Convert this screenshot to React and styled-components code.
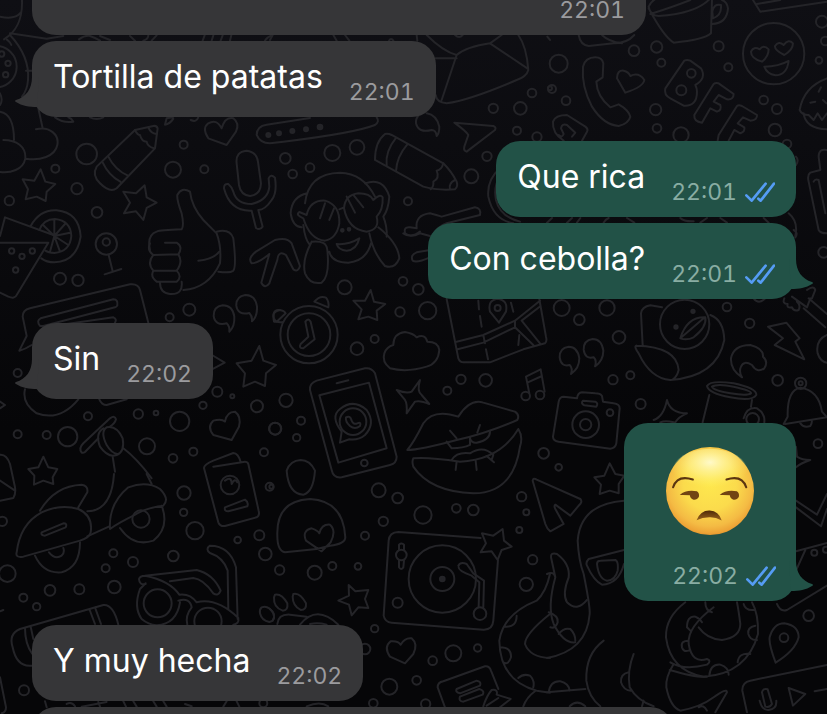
import React from 'react';
import styled, { createGlobalStyle, ThemeProvider } from 'styled-components';

const theme = {
    backgroundTop: '#0f0f14',
    backgroundBottom: '#060608',
    doodleColor: '#242428',
    receivedColor: '#363638',
    sentColor: '#225247',
    textColor: '#ffffff',
    receivedTimeColor: '#9b9b9e',
    sentTimeColor: '#89ada3',
    readColor: '#559cf4',
};

const messages = [
    { id: 1, time: '22:01', width: 614 },
    { id: 2, text: 'Tortilla de patatas', time: '22:01', last: true },
    { id: 3, text: 'Que rica', time: '22:01', sent: true },
    { id: 4, text: 'Con cebolla?', time: '22:01', sent: true, last: true },
    { id: 5, text: 'Sin', time: '22:02', last: true },
    { id: 6, emoji: true, time: '22:02', sent: true, last: true },
    { id: 7, text: 'Y muy hecha', time: '22:02' },
    { id: 8, width: 662 },
];

// Doodles of the wallpaper, one block per tile.
// Each tile is 840 x 720 units, drawn at a third of its size.
// c: circles [x, y, r], d: filled dots, p: outlines
const tiles = [
    {
        x: 0,
        y: 0,
        c: [[-12, 200, 62], [5, 162, 8], [24, 190, 8], [17, 224, 8], [260, 462, 31], [551, 434, 12], [519, 509, 24], [613, 508, 12], [166, 506, 12], [231, 566, 17], [28, 602, 14], [291, 637, 16]],
        p: [
            'M66 0C68 60 50 95 12 118M0 50Q45 60 62 38',
            'M30 100L140 116L190 108M30 105Q90 170 84 240Q82 270 66 290M20 118Q30 125 34 135M78 212H100',
            'M0 280Q10 300 0 315',
            'M0 335C30 340 42 370 42 420M10 420C50 420 78 440 76 475C70 510 30 520 0 516M115 325L128 385M108 388C150 378 178 405 172 435C165 470 120 482 78 476',
            'M122 508L136 545L166 552L140 575L137 603L110 590L77 598L84 568L68 538L103 542Z',
            'M434 556L440 592L470 608L440 624L430 660L408 634L372 640L390 608L370 575L408 580Z',
            'M405 390L290 500Q275 525 300 550Q330 580 350 565L465 445L473 385Q470 376 460 378Z',
            'M325 470Q345 510 384 527M308 487Q325 525 362 546M405 390Q412 405 420 405Q425 425 440 425Q442 440 462 445M445 382Q452 400 470 402',
            'M680 435L625 415Q605 385 625 370Q650 355 665 385Q675 350 700 355Q720 370 708 395Z',
            'M165 352Q190 370 220 365Q215 355 205 352M270 352Q290 362 310 352M500 355Q520 350 520 356Q510 372 495 374ZM572 360Q590 368 595 352',
            'M710 490Q706 455 740 452Q770 455 774 485L783 550Q782 585 750 588Q722 585 717 555Z',
            'M672 565Q672 550 685 552Q695 560 700 575Q710 612 755 612Q805 600 808 560L806 535Q812 520 825 533Q832 580 815 600Q795 630 775 630L788 680Q780 692 768 684L755 632Q690 635 672 565Z',
            'M237 118Q255 105 270 108Q290 115 300 122M300 108L330 120M390 108L405 122M430 122Q445 118 445 106M455 122L470 106M608 122L614 106M635 122L640 106M662 122L668 106M690 122L694 106M795 122Q800 112 815 106',
        ],
    },
    {
        x: 270,
        y: 0,
        c: [[187, 459, 24], [261, 442, 22], [46, 475, 16], [68, 522, 13], [120, 503, 13], [670, 325, 14], [751, 325, 19], [786, 279, 13], [741, 392, 12], [801, 411, 14], [651, 469, 14], [604, 529, 21], [414, 604, 12], [840, 265, 6]],
        d: [[-5, 405, 6], [27, 400, 6], [67, 393, 6], [108, 388, 6], [150, 381, 7], [217, 691, 4], [237, 688, 4]],
        p: [
            'M470 105Q520 155 560 165L515 300M560 175H497M560 165Q590 140 660 130L695 105M660 130L772 205M745 105Q770 140 775 210Q770 230 740 240Q600 300 530 310Q500 308 497 285M555 105Q568 117 578 105',
            'M120 354L-10 374Q-40 378 -40 405Q-30 430 0 430L40 425Q250 400 315 375Q330 365 320 352',
            'M345 402Q315 425 315 480L460 560Q500 572 555 568Q565 560 560 545Q545 515 520 490L365 405Q355 400 345 402Z',
            'M378 414Q345 455 350 497M412 433Q380 470 378 514M520 490Q515 510 500 512Q510 535 490 545Q492 560 482 568M555 540Q535 550 540 568',
            'M470 340Q500 345 508 380Q508 400 500 408Q498 390 485 390Q445 400 438 370Q437 355 445 348',
            'M553 368L670 378Q680 382 675 390L590 455Q580 452 583 440L595 405Q590 395 553 368Z',
            'M690 505Q650 540 655 590Q670 660 730 670M690 530Q670 560 678 600Q690 650 750 665',
            'M105 610Q115 520 210 518Q280 520 315 590M112 580Q65 590 62 640Q68 680 95 682M285 550Q340 530 358 590Q355 630 340 650Q352 680 350 710',
            'M100 655Q75 645 88 636L110 645Q120 600 165 602Q210 615 208 670Q200 715 165 722Q120 720 100 655ZM222 625Q225 585 265 580Q300 580 310 600Q330 580 338 592Q340 630 320 650Q330 690 290 695Q235 690 222 625ZM208 628L222 622',
            'M150 655L165 610M178 660L192 625M230 590L255 638M250 585L280 622',
            'M405 700Q400 680 420 682L440 685Q435 645 480 640Q500 645 515 650L615 622Q635 625 630 645L530 670Q500 680 485 712M405 700Q425 715 450 695',
            'M0 120L8 105M190 105L200 122M225 105L238 122M440 105L442 122M357 122Q363 112 370 122M832 110L840 120',
        ],
    },
    {
        x: 547,
        y: 0,
        c: [[35, 191, 27], [15, 267, 12], [57, 302, 13], [261, 152, 16], [329, 141, 17], [343, 188, 12], [515, 139, 15], [544, 202, 12], [326, 329, 17], [330, 385, 13], [402, 405, 23], [650, 300, 13], [690, 327, 15], [684, 390, 19], [825, 65, 18], [835, 123, 13], [816, 181, 10], [720, 432, 13], [680, 161, 92], [433, 220, 13], [403, 271, 15]],
        p: [
            'M645 185Q612 175 612 155Q620 138 638 148Q650 132 665 148Q665 170 645 185ZM712 165Q682 150 684 138Q695 122 710 135Q725 115 738 130Q738 150 712 165ZM652 200Q695 200 725 183Q720 225 685 226Q660 222 652 200Z',
            'M169 190Q165 172 145 172Q115 172 108 200Q103 260 135 320Q170 375 215 378Q245 370 250 350Q245 330 215 313L190 322Q150 290 148 245L167 232Z',
            'M235 278L210 235Q210 210 230 212Q245 215 250 228Q275 215 292 240Q290 260 235 278Z',
            'M412 182L355 265Q350 285 370 295L410 317Q450 320 450 275Q450 265 445 255Q480 235 462 205L430 182Q420 178 412 182Z',
            'M500 252L442 345Q440 365 465 368L490 325L510 335Q525 330 520 315L500 305L515 285L540 298Q560 300 560 282L515 250Q505 248 500 252Z',
            'M570 318L515 405L512 422M545 422L562 390L580 400Q595 395 592 382L572 370L588 352L610 362Q632 360 630 345L585 318Q575 314 570 318',
            'M305 20Q315 0 330 -5M305 20Q310 48 335 48Q450 40 490 -5M305 25Q350 110 380 128Q470 120 492 100L495 0M310 42Q380 20 430 0M495 72Q540 70 543 25Q540 5 525 0M498 55Q525 45 522 15Q500 10 496 35Z',
            'M618 0L640 35L840 5M630 12L700 0',
            'M840 235Q770 260 758 330Q765 345 785 345L800 360L812 340L825 360L840 340M770 340Q775 385 840 388M815 275L822 262M790 308L805 305M828 300L838 310',
            'M840 450Q815 445 815 470L820 510L790 518Q780 525 785 545L815 690Q820 700 840 700M800 545Q805 535 815 540L835 640',
            'M50 422Q15 400 18 365Q25 345 60 345L115 380Q125 388 120 395L105 422M75 410L85 398L60 375Q45 370 42 385L50 402Q45 415 35 405',
            'M95 105Q100 135 125 138L200 130Q240 130 262 105M165 105Q185 125 225 130',
            'M747 470Q757 480 747 495M725 640Q755 665 745 708M0 668L15 654M60 668L75 654M100 654L90 668M170 668Q175 658 185 654M240 654L262 668M400 654Q410 665 440 664M460 668L480 654M520 654L540 668M650 654L665 668',
        ],
    },
    {
        x: 0,
        y: 230,
        c: [[319, 42, 32], [319, 36, 11], [35, 63, 8], [66, 79, 8], [97, 63, 8], [47, 120, 8], [180, 146, 18], [234, 151, 17], [509, 262, 12], [568, 239, 18], [53, 429, 12], [652, 485, 15], [697, 499, 6], [609, 526, 11], [771, 529, 18], [825, 596, 18], [415, 552, 14], [468, 549, 7], [539, 574, 29], [264, 559, 12], [203, 620, 29], [441, 649, 24], [580, 665, 12], [519, 685, 13], [792, 667, 12], [53, 613, 12], [140, 615, 12]],
        p: [
            'M0 18L15 -38L160 15M0 38H145L50 195Q45 208 25 200L0 188',
            'M92 -12Q120 -62 170 -59Q238 -52 242 20Q230 95 163 97Q140 97 124 85M118 0Q130 -32 165 -33Q212 -28 214 18Q210 65 163 69Q145 68 136 62M163 18V-30M163 18L195 -18M163 18L210 8M163 18L205 45M163 18L180 65M163 18L150 65M163 18L130 -14',
            'M326 75L338 124M314 133L364 117',
            'M450 60Q440 15 470 5Q480 0 545 -2Q553 -12 545 -50Q530 -90 532 -105Q545 -130 570 -115Q575 -70 610 -30L650 10Q665 50 660 100Q625 175 550 180',
            'M495 38H530Q550 50 535 73L460 75Q440 60 450 40M460 75Q440 100 460 122H530Q550 95 535 73M460 122Q450 140 470 155H530Q548 140 530 122M480 157Q480 190 510 192Q550 195 545 155M595 92Q640 88 658 65M650 5Q690 -5 700 25Q710 110 700 122Q690 130 655 125',
            'M95 345Q75 358 58 362L80 318L68 260Q68 240 90 235L390 163Q415 160 420 180L445 278M120 288Q108 272 122 265L340 208Q355 208 352 226Q350 230 345 232L130 288ZM200 282L340 262Q352 268 345 278',
            'M688 305Q705 290 703 260Q698 226 668 226Q640 230 641 258Q645 288 680 280Q690 290 688 305Z',
            'M756 274Q773 259 771 229Q766 195 736 195Q708 199 709 227Q713 257 748 249Q758 259 756 274Z',
            'M755 100Q742 85 768 65L825 30Q862 20 875 40L900 108Q895 128 880 118L858 75Q835 60 832 90L808 160Q795 178 784 158L808 72Q775 100 755 100Z',
            'M778 348L790 392L828 405L798 430L795 468L765 455L730 470L735 430L710 400L755 392Z',
            'M636 375L674 398L636 418M75 478Q65 520 110 550Q180 575 235 508M298 508Q305 525 320 525L380 508M0 515L15 525L0 535M840 240Q815 245 822 265Q828 280 850 276',
            'M695 630L640 615Q620 590 640 572Q665 565 675 575Q680 545 705 545Q725 560 717 590Z',
            'M245 668Q235 655 250 640L330 565Q345 555 348 568Q345 580 330 590M295 625L255 666Q250 670 245 668',
            'M310 595Q285 610 300 650Q325 685 350 675Q375 665 368 625Q350 585 320 592Q300 605 320 645Q335 670 352 672M338 680L345 725M370 655Q410 685 455 745',
        ],
    },
    {
        x: 270,
        y: 230,
        c: [[224, 172, 21], [399, 154, 13], [445, 178, 16], [390, 246, 14], [473, 242, 26], [314, 327, 12], [261, 356, 19], [48, 511, 20], [93, 572, 12], [16, 596, 18], [80, 623, 11], [573, 448, 14], [532, 482, 12], [647, 451, 19], [821, 670, 16], [283, 699, 10], [117, 314, 86], [117, 314, 64], [249, 575, 40], [767, 498, 13], [810, 495, 13], [683, 234, 9]],
        p: [
            'M12 275Q5 240 25 240Q42 240 47 250L20 275ZM133 215Q150 195 168 203Q178 215 175 232ZM106 275Q115 262 122 275L134 328L100 355Q85 355 92 342L115 320Z',
            'M302 180L312 215L346 222L320 242L322 270L295 260L265 268L275 238L250 212L285 212Z',
            'M360 415Q335 395 343 370Q350 350 370 345Q370 310 405 306Q430 310 440 322Q465 310 472 335Q505 335 508 360Q505 400 470 410Q410 428 360 415Z',
            'M185 720L120 480Q118 460 140 452L285 415Q305 412 315 430L380 680Q380 700 360 705L215 742Q190 745 185 720ZM148 496L297 458L350 655L205 698ZM200 460L235 451',
            'M215 605Q180 560 210 537Q250 505 290 540Q318 580 285 615Q265 632 238 628L210 638ZM228 562Q240 555 245 572Q250 585 262 580Q275 575 270 588Q255 600 240 588Q225 575 228 562Z',
            'M450 450Q440 485 455 495L478 522Q450 510 435 515L410 550Q412 520 405 510L380 480Q410 492 425 485Z',
            'M412 660Q430 640 460 580Q490 535 565 560Q600 505 640 518L735 545Q750 555 742 570Q650 610 560 630Q450 660 412 660Z',
            'M430 685Q470 680 570 695Q690 690 745 597Q760 620 750 650Q730 790 610 790Q480 785 430 710Q425 695 430 685Z',
            'M530 635L545 655Q580 655 600 645V622M600 625Q605 640 620 638Q660 630 660 605M540 602L560 625M630 585L622 608M545 690Q560 665 600 670Q640 645 670 675L665 690M560 695L557 720M617 692L620 720M650 678L672 697',
            'M530 207L565 385Q570 397 580 397H660L760 358L825 340Q832 335 828 320L808 207M560 335L640 315L735 272L810 212M563 358L640 338L735 292L790 345M755 272L810 340M755 272L812 228M640 315L645 340M735 272V292',
            'M625 212L627 238M630 258L635 290M648 358L654 388M723 218L730 245M748 315L745 345M687 278L660 245Q652 210 683 206Q715 210 708 245Z',
            'M778 490L768 440L812 418L824 485M772 458L816 438',
            'M125 35Q95 90 105 130Q120 165 155 158Q180 140 172 60Q170 30 125 35M298 10Q310 70 345 108Q375 118 388 85Q385 40 325 -8M178 65Q185 98 235 98Q290 92 303 40M200 42Q235 45 268 25Q260 60 230 62Q205 60 200 42ZM100 -15Q105 30 120 45',
            'M480 60L440 67Q420 75 428 92Q440 100 480 82M400 10Q420 25 450 10L480 18',
        ],
    },
    {
        x: 547,
        y: 230,
        c: [[44, 234, 24], [97, 269, 16], [180, 234, 23], [216, 322, 19], [198, 449, 14], [250, 436, 12], [281, 522, 15], [540, 231, 13], [608, 280, 14], [692, 451, 16], [813, 641, 13], [35, 712, 10], [830, 67, 16], [116, 584, 40], [116, 584, 17], [189, 548, 10], [413, 283, 74], [761, 460, 17], [761, 460, 6], [617, 568, 19]],
        d: [[387, 291, 5], [438, 244, 5]],
        p: [
            'M72 432Q97 415 97 385Q92 350 65 350Q37 354 38 382Q42 412 68 405Q78 415 72 432ZM144 409Q169 392 169 362Q164 327 137 327Q109 331 110 359Q114 389 140 382Q150 392 144 409Z',
            'M90 505L50 500Q38 500 35 515L18 620Q18 632 35 635L190 656Q205 655 208 640L218 535Q218 522 200 520L168 515L165 498Q160 490 145 490L105 487Q92 488 90 505ZM108 512L145 515Q155 520 148 530L112 526Q100 520 108 512Z',
            'M345 232L310 226Q285 230 282 250L287 345M268 347Q260 350 275 370Q310 445 370 450Q510 440 532 330Q530 270 490 255M268 347Q390 350 395 420Q390 440 378 448M400 325Q420 260 475 262Q480 290 440 322Q420 332 400 325L470 265',
            'M585 442Q550 420 552 385Q560 345 610 345Q650 355 648 380Q665 395 652 415Q630 430 615 405Q590 390 582 410Q575 425 585 442Z',
            'M663 290L718 278L758 325L745 335L772 388L683 345L708 325Z',
            'M710 582L722 560Q720 480 760 473Q815 480 825 545L840 562L715 582M760 580Q770 595 790 588Q795 580 795 572',
            'M480 468Q490 450 560 460Q630 475 628 495Q615 515 550 502Q485 490 480 468ZM495 470Q510 460 560 470Q615 482 612 490Q600 498 550 490Q500 482 495 470ZM487 495L467 577M615 510L612 530M590 565Q600 530 630 535Q655 550 652 577',
            'M320 570Q350 560 360 510Q370 550 420 550Q395 560 385 577M340 577Q355 570 380 577M747 650L750 680Q765 690 790 690Q760 700 747 712',
            'M712 205Q705 222 722 222Q718 235 735 232Q740 245 755 240Q762 225 750 215M785 205L840 252M770 235L835 292M735 200L780 232L790 205M780 180Q800 165 805 180L795 205M840 315Q805 330 812 370Q820 395 840 398M620 205Q635 225 655 205M740 0Q755 8 745 22',
        ],
    },
    {
        x: 0,
        y: 474,
        c: [[552, 57, 20], [551, 115, 11], [585, 170, 26], [340, 238, 12], [317, 283, 12], [399, 264, 15], [520, 246, 16], [22, 299, 25], [150, 349, 16], [238, 346, 15], [343, 339, 19], [70, 371, 12], [110, 398, 11], [7, 142, 14], [809, 38, 12], [713, 198, 10], [778, 184, 15], [796, 240, 19], [72, 649, 15], [423, 135, 26], [690, 33, 28], [473, 388, 42], [624, 442, 41], [790, 688, 12]],
        p: [
            'M342 0Q335 110 262 112M440 0L455 30M120 110Q165 35 245 32Q265 35 262 55L235 100M50 235Q60 150 125 115Q180 90 235 105Q280 125 272 175Q270 190 240 200L70 248Q45 252 50 235ZM125 175L190 148Q203 148 197 160L135 185Q122 185 125 175Z',
            'M105 245Q130 300 185 295Q240 280 240 205M147 235Q165 258 185 245Q195 235 190 222M330 165Q325 90 385 40Q440 20 480 45Q510 75 490 95Q440 100 400 125Q350 150 330 165ZM262 187L328 157M360 162Q400 220 460 200Q510 160 485 95',
            'M130 -52L145 -20L172 -15L158 10L160 30L130 20L102 32L103 5L85 -15L115 -20Z',
            'M0 80L40 72Q48 60 45 40L30 -30Q20 -60 0 -58M45 50L0 20',
            'M612 -18L655 145Q660 158 675 156L770 130Q780 125 776 110L745 -30Q742 -38 730 -36L640 -22M612 -18Q612 -28 640 -40L700 -63Q715 -62 722 -36M675 20Q695 5 695 30Q705 10 712 25M675 100L735 77Q747 85 742 97L685 112Q672 112 675 100Z',
            'M437 330Q418 335 417 315Q420 305 435 305L590 288Q640 300 662 350Q655 368 640 358Q610 315 580 312L510 322M437 328L420 345Q400 400 425 435Q445 452 470 454Q530 450 540 385M435 305Q510 320 538 362Q570 358 590 385Q650 370 715 432Q718 450 700 452M535 380Q570 370 575 400Q555 425 562 452M685 405L683 290Q670 250 630 237Q615 225 630 215Q690 215 708 280L713 435',
            'M95 575Q50 580 38 520Q25 480 60 465L310 393Q340 390 355 452M75 462Q75 510 97 540M92 458L100 495M268 405L285 450M285 400L303 450',
            'M0 610L18 700Q18 715 5 718M135 682L140 700M200 690Q215 682 225 697M245 698L320 684M295 684L300 698M370 682L378 698M400 682L410 698M460 682L470 698M490 682L500 698M555 690L575 697M670 698L680 682M710 682L718 698M0 412L10 408',
            'M785 400Q805 392 820 418Q828 440 808 444Q785 440 780 418Q778 405 785 400Z',
        ],
    },
    {
        x: 270,
        y: 474,
        c: [[326, 49, 21], [383, 72, 16], [340, 142, 14], [285, 185, 12], [459, 123, 26], [559, 103, 13], [610, 108, 16], [755, 68, 14], [769, 115, 9], [748, 168, 9], [29, 288, 14], [134, 296, 21], [187, 276, 12], [264, 277, 10], [788, 257, 14], [769, 331, 20], [314, 464, 11], [285, 525, 16], [550, 538, 24], [488, 560, 13], [623, 522, 11], [358, 638, 24], [440, 619, 13], [310, 688, 13], [467, 690, 14], [4, 38, 6], [517, 315, 101], [517, 315, 36], [394, 243, 16], [383, 386, 15], [630, 419, 19]],
        d: [[517, 315, 7]],
        p: [
            'M236 333L256 352L295 348L285 375L295 402L265 400L245 424L237 392L205 380L237 365Z',
            'M632 192L385 174Q358 175 356 200L341 425Q345 445 365 446L640 467Q668 468 670 440L684 258M698 165L702 200L725 218L695 228L683 258L665 232L632 235L648 208L636 178L670 185Z',
            'M387 228V212Q395 205 402 212V228M387 260V280Q393 290 400 280L402 260M565 275Q572 262 590 270L610 298L642 320L640 400M566 280Q565 290 605 305L628 325L626 400',
            'M405 568L360 548Q340 520 362 502Q385 500 392 512Q405 490 425 493Q445 510 430 540Z',
            'M50 -10Q55 60 100 62Q130 55 135 -10Q120 -42 92 -42Q60 -40 50 -10M22 185Q18 80 120 75Q220 80 226 190Q225 210 180 215L140 225L45 235Q22 230 22 185ZM155 232L108 200Q95 170 125 163Q145 170 148 178Q155 150 180 152Q200 170 182 205Z',
            'M525 700L503 640Q503 625 520 622L645 577Q658 575 663 590L685 645M560 645L620 620Q635 622 630 635L570 658Q555 655 560 645ZM570 668L628 645Q645 650 638 662L580 683Q565 682 570 668ZM640 697Q650 665 665 648Q685 645 680 662L722 675L690 700M650 695L685 672',
            'M22 450Q25 420 60 422L110 428M90 452Q140 390 205 452M120 450Q145 445 170 452M110 697Q150 680 175 697M15 362Q35 358 52 388Q55 410 38 410Q10 400 12 370ZM70 360Q90 355 108 388Q110 408 92 408Q68 395 68 368ZM0 405Q20 420 8 440',
            'M840 300Q828 355 800 380Q700 420 688 500Q690 620 800 650L840 656M840 420Q765 480 765 510Q780 550 840 552M740 425Q740 460 706 458M690 520Q725 520 723 550Q715 575 700 565M745 612Q760 598 780 605Q795 620 790 640M760 697Q770 670 795 652',
        ],
    },
    {
        x: 547,
        y: 474,
        c: [[711, 491, 13], [785, 425, 16], [802, 236, 9], [837, 227, 9]],
        p: [
            'M-43 20Q-41 10 -31 17L100 75Q108 85 95 95L70 125L25 92Q20 95 25 105L50 150L10 172Q0 165 -5 150Z',
            'M12 250Q10 235 30 240Q70 270 65 310Q45 360 60 385Q90 415 120 378M12 250L25 310M0 300Q20 290 25 310Q0 400 20 450Q50 510 85 505M5 415Q35 425 32 445Q25 465 10 460M35 480Q50 460 70 465Q85 480 85 500',
            'M231 80Q100 90 92 200Q95 260 110 300Q130 400 128 420Q120 530 0 552M231 228L125 255Q115 265 120 275Q140 320 165 332Q215 330 231 270M150 270Q150 260 160 260L205 258Q215 262 212 290Q205 318 180 320Q155 315 150 270Z',
            'M170 500Q115 540 118 620Q125 670 160 697M260 540Q240 590 248 640Q270 680 320 697M245 595Q220 600 222 625Q230 650 252 650M290 680L285 697M0 655L115 645M5 655Q10 620 40 622Q65 628 68 650M68 697Q90 675 115 697',
            'M415 385Q355 430 357 490Q370 590 470 608Q600 600 633 480Q635 420 615 385M500 400Q420 460 425 510Q435 570 480 555Q495 560 480 572Q410 590 370 565M455 460Q480 495 525 498Q580 490 580 450Q575 410 570 385M430 470L420 460Q420 425 445 428Q460 435 465 445M425 500Q400 500 405 520Q410 535 425 530M475 385Q475 410 495 415M590 390Q595 410 620 408M625 455Q600 460 604 480Q610 500 630 498M572 565Q575 535 610 540M487 605Q490 570 520 572Q545 580 545 602',
            'M380 570Q355 610 358 640Q370 700 400 710Q460 700 500 670Q540 640 540 655L505 715M368 588Q450 612 480 608M455 700Q470 690 480 710',
            'M686 566Q665 510 668 490Q680 448 712 448Q755 455 755 490Q745 530 686 566ZM600 715L586 650Q585 625 610 620L840 573M645 655Q648 642 662 646L675 690Q668 702 655 698ZM638 680Q645 710 665 708Q690 705 688 680M725 642L775 660L738 695ZM803 652L840 645',
            'M747 80L810 122L840 60M747 100L822 157L840 105M747 232L840 207M775 228L747 290M690 390Q700 415 720 408L840 335',
            'M188 -32L205 0L232 5L215 30V58L188 50L158 60L162 32L142 10L172 5Z',
        ],
    },
];

export default function App() {
    const messageList = messages.map((message) => <MessageItem key={message.id} message={message} />);
    return (
        <ThemeProvider theme={theme}>
            <GlobalStyle />
            <ChatView>
                <Wallpaper />
                <MessageListView>{messageList}</MessageListView>
            </ChatView>
        </ThemeProvider>
    );
}

function MessageItem({ message }) {
    const { text, time, sent, last, emoji, width } = message;
    return (
        <MessageItemView $sent={sent} $last={last}>
            <Bubble $sent={sent} $emoji={emoji} $width={width}>
                {text && <MessageText>{text}</MessageText>}
                {emoji && <UnamusedFace />}
                {time && (
                    <MetaView $sent={sent}>
                        <time>{time}</time>
                        {sent && <ReadTicks />}
                    </MetaView>
                )}
                {last && <BubbleTail sent={sent} />}
            </Bubble>
        </MessageItemView>
    );
}

function BubbleTail({ sent }) {
    return (
        <Tail $sent={sent} viewBox="0 0 24 32" aria-hidden="true">
            <path d="M17 0C17 12 11 20 1 23Q-1 24 1 25C7 29 14 30 22 30L24 0Z" />
        </Tail>
    );
}

function ReadTicks() {
    return (
        <Ticks viewBox="0 0 90 60" role="img" aria-label="Leído">
            <path d="M4 40L20 56L62 5M40 50L47 56L87 5" />
        </Ticks>
    );
}

function UnamusedFace() {
    return (
        <Face viewBox="50 52 262 262" role="img" aria-label="Cara de desaprobación">
            <defs>
                <radialGradient id="skin" cx="0.5" cy="0.42" r="0.6">
                    <stop offset="0" stopColor="#fee84e" />
                    <stop offset="0.5" stopColor="#fbdb4c" />
                    <stop offset="0.8" stopColor="#f4bb44" />
                    <stop offset="0.93" stopColor="#eda336" />
                    <stop offset="1" stopColor="#de8a26" />
                </radialGradient>
                <radialGradient id="shine" cx="0.5" cy="0.3" r="0.55">
                    <stop offset="0" stopColor="#fffbd0" stopOpacity="0.95" />
                    <stop offset="0.5" stopColor="#fff69a" stopOpacity="0.6" />
                    <stop offset="1" stopColor="#fff36a" stopOpacity="0" />
                </radialGradient>
                <linearGradient id="mouth" x1="0" y1="0" x2="0" y2="1">
                    <stop offset="0" stopColor="#4e2a08" />
                    <stop offset="1" stopColor="#9a641d" />
                </linearGradient>
            </defs>
            <circle cx="181" cy="183" r="131" fill="url(#skin)" />
            <ellipse cx="181" cy="125" rx="112" ry="68" fill="url(#shine)" />
            <g fill="none" stroke="#5b3511" strokeWidth="6" strokeLinecap="round">
                <path d="M71 172Q84 134 130 149" />
                <path d="M230 149Q276 134 289 172" />
            </g>
            <g fill="#714413">
                <path d="M91 195Q110 178 142 184Q150 190 148 200Q143 210 132 209Q122 206 121 196Q106 194 91 195Z" />
                <path d="M210 195Q229 178 261 184Q269 190 267 200Q262 210 251 209Q241 206 240 196Q225 194 210 195Z" />
            </g>
            <path d="M141 270Q153 240 180 241Q207 242 216 271Q197 260 179 261Q158 261 141 270Z" fill="url(#mouth)" />
        </Face>
    );
}

function Wallpaper() {
    return (
        <WallpaperView viewBox="0 0 827 714" preserveAspectRatio="xMinYMin slice" aria-hidden="true">
            {tiles.map((tile) => (
                <g key={`${tile.x}-${tile.y}`} transform={`translate(${tile.x} ${tile.y}) scale(0.3333)`}>
                    {tile.c.map(([x, y, r]) => (
                        <circle key={`${x}-${y}-${r}`} cx={x} cy={y} r={r} />
                    ))}
                    {tile.d?.map(([x, y, r]) => (
                        <Dot key={`${x}-${y}`} cx={x} cy={y} r={r} />
                    ))}
                    {tile.p.map((d) => (
                        <path key={d} d={d} />
                    ))}
                </g>
            ))}
        </WallpaperView>
    );
}

const GlobalStyle = createGlobalStyle`
    * {
        box-sizing: border-box;
    }

    body {
        margin: 0;
        background: ${(props) => props.theme.backgroundBottom};
        font-family: Inter, 'Liberation Sans', sans-serif;
    }
`;

const ChatView = styled.main`
    position: relative;
    height: 100vh;
    overflow: hidden;
    background: linear-gradient(
        ${(props) => props.theme.backgroundTop},
        ${(props) => props.theme.backgroundBottom} 60%
    );
`;

const WallpaperView = styled.svg`
    position: absolute;
    inset: 0;
    width: 100%;
    height: 100%;
    fill: none;
    stroke: ${(props) => props.theme.doodleColor};
    stroke-width: 6;
    stroke-linecap: round;
    stroke-linejoin: round;
`;

const Dot = styled.circle`
    fill: ${(props) => props.theme.doodleColor};
`;

/* scrolled so that the first message is half out of view */
const MessageListView = styled.ol`
    position: relative;
    display: flex;
    flex-direction: column;
    margin: -41px 0 0;
    padding: 0 31px 0 32px;
    list-style: none;
`;

const MessageItemView = styled.li`
    display: flex;
    justify-content: ${(props) => (props.$sent ? 'flex-end' : 'flex-start')};
    margin-bottom: ${(props) => (props.$last ? '24px' : '6px')};
`;

const Bubble = styled.div`
    position: relative;
    display: flex;
    flex-direction: ${(props) => (props.$emoji ? 'column' : 'row')};
    justify-content: space-between;
    gap: ${(props) => (props.$emoji ? '31px' : '26px')};
    width: ${(props) => (props.$width ? `${props.$width}px` : 'auto')};
    max-width: 84%;
    min-height: 76px;
    padding: ${(props) => (props.$emoji ? '24px 20px 15px' : '16px 21px 15px')};
    border-radius: 24px;
    background: ${(props) => (props.$sent ? props.theme.sentColor : props.theme.receivedColor)};
`;

const MessageText = styled.p`
    margin: 0;
    font-size: 32px;
    line-height: 40px;
    color: ${(props) => props.theme.textColor};
`;

const MetaView = styled.span`
    display: flex;
    align-items: center;
    align-self: flex-end;
    gap: 8px;
    margin-left: auto;
    font-size: 23px;
    line-height: 20px;
    font-variant-numeric: tabular-nums;
    color: ${(props) => (props.$sent ? props.theme.sentTimeColor : props.theme.receivedTimeColor)};
`;

const Ticks = styled.svg`
    width: 30px;
    height: 20px;
    fill: none;
    stroke: ${(props) => props.theme.readColor};
    stroke-width: 8;
    stroke-linecap: round;
    stroke-linejoin: round;
`;

const Tail = styled.svg`
    position: absolute;
    bottom: 8px;
    left: ${(props) => (props.$sent ? 'auto' : '-17px')};
    right: ${(props) => (props.$sent ? '-17px' : 'auto')};
    width: 24px;
    height: 32px;
    transform: ${(props) => (props.$sent ? 'scaleX(-1)' : 'none')};
    fill: ${(props) => (props.$sent ? props.theme.sentColor : props.theme.receivedColor)};
`;

const Face = styled.svg`
    width: 88px;
    height: 88px;
    margin: 0 22px;
`;
